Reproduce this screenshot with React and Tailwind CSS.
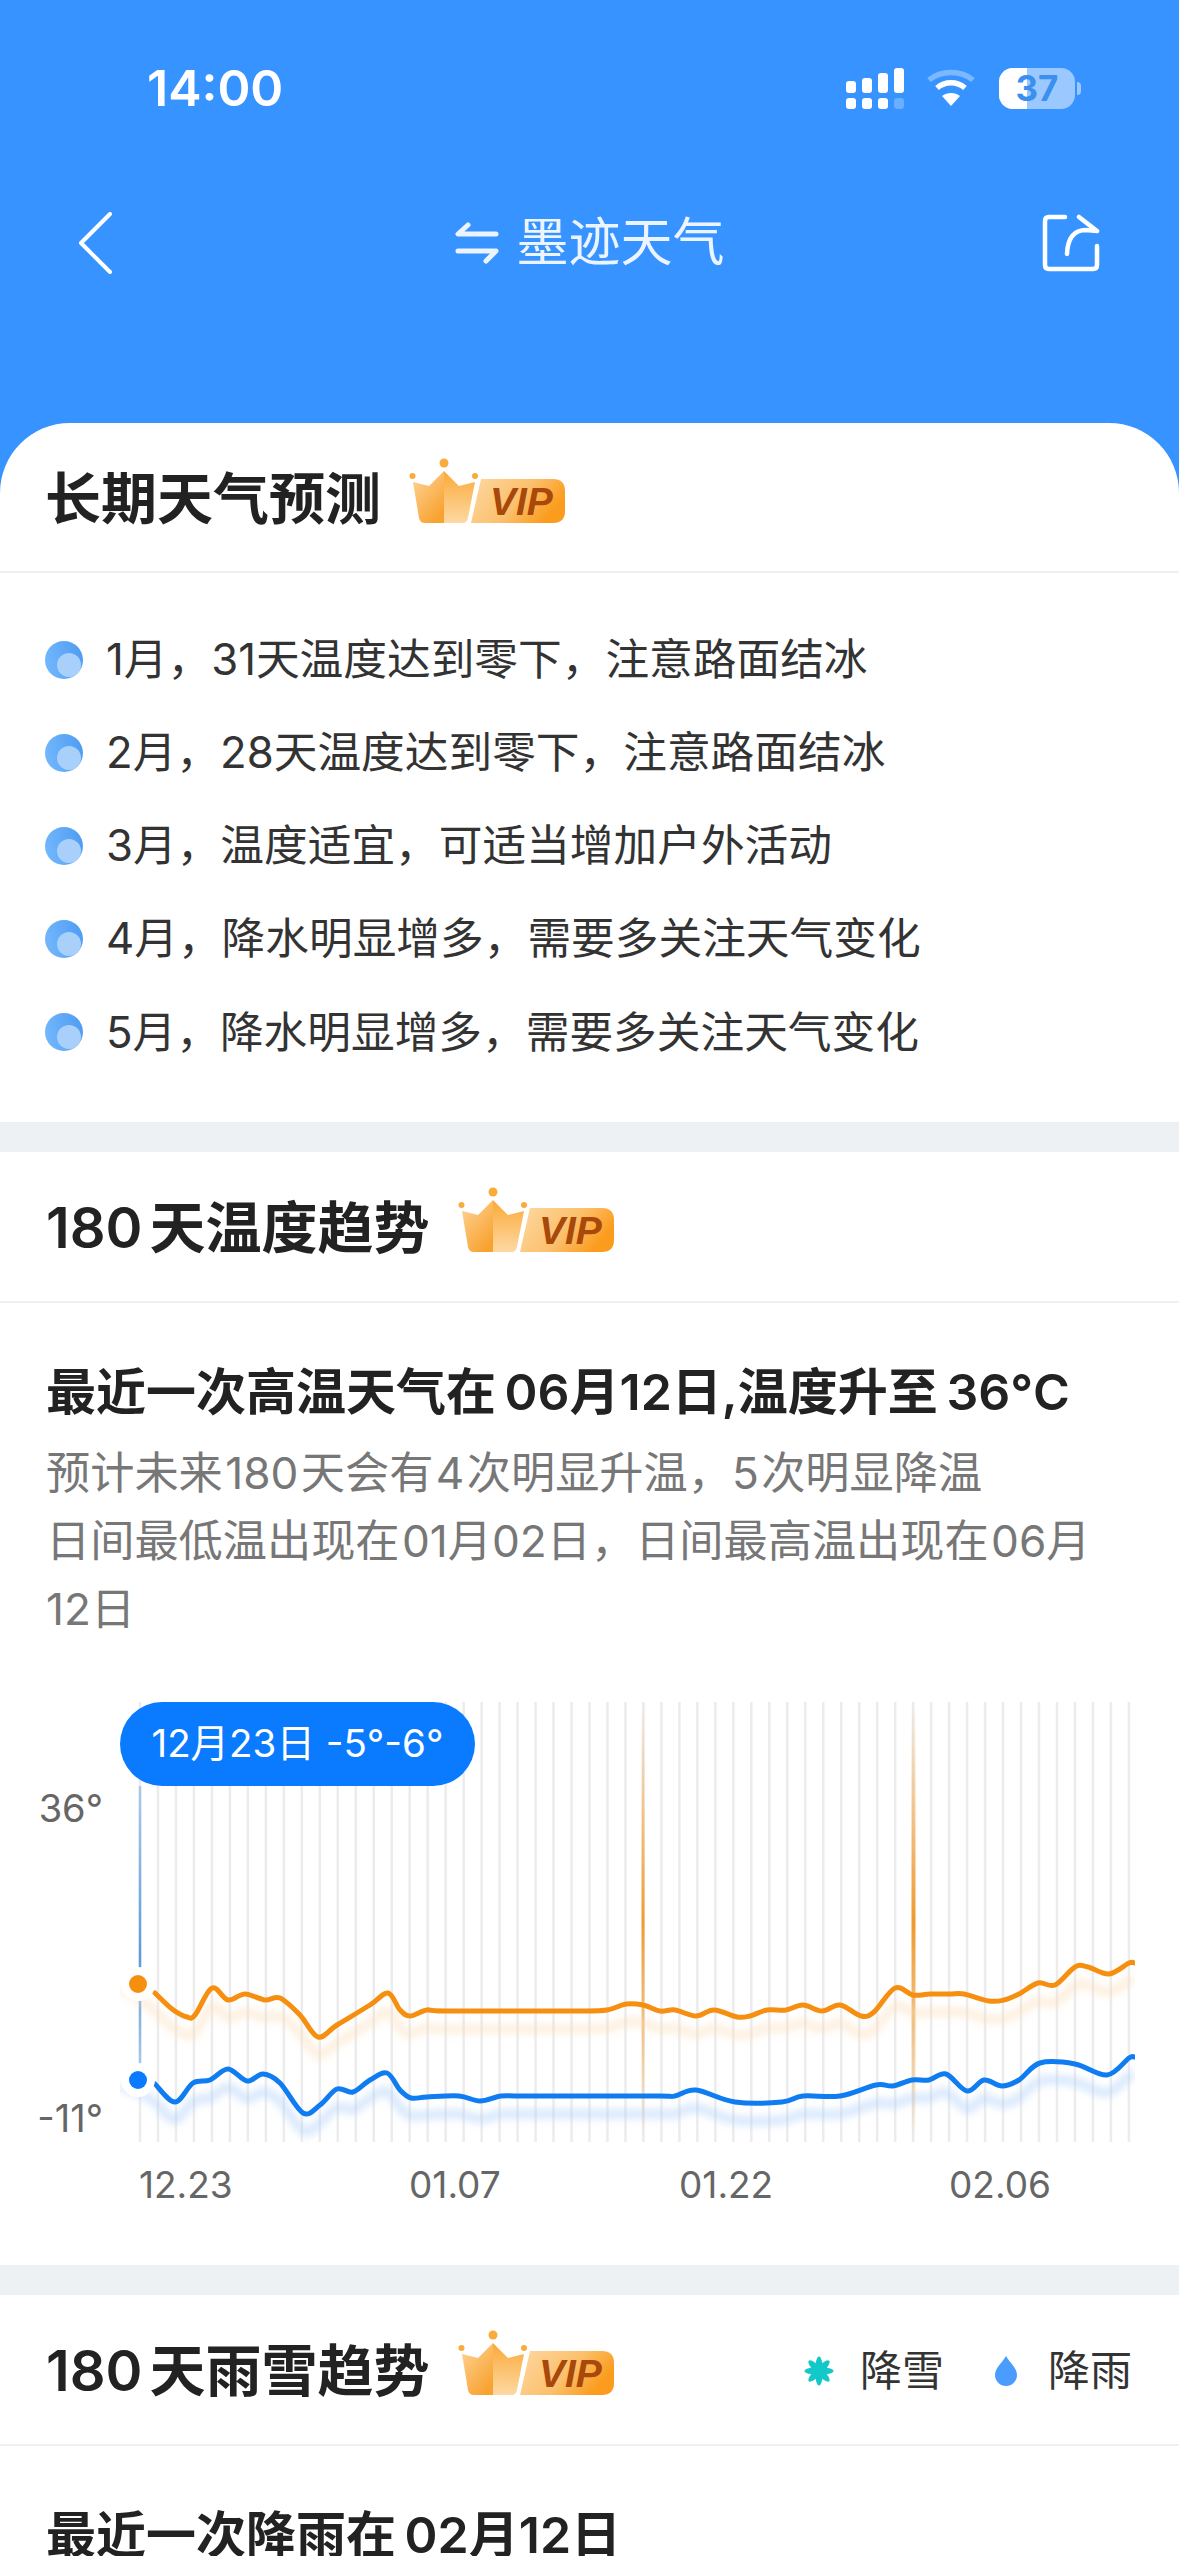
import React from 'react';

const MONTH_NOTES = [
  '1月，31天温度达到零下，注意路面结冰',
  '2月，28天温度达到零下，注意路面结冰',
  '3月，温度适宜，可适当增加户外活动',
  '4月，降水明显增多，需要多关注天气变化',
  '5月，降水明显增多，需要多关注天气变化',
];

// daily highs and lows, in plot coordinates
const HIGHS = [[155,1993],[172,2009],[187,2017],[195,2015],[212,1988],[228,2000],[245,1994],[265,2000],[280,1998],[300,2015],[318,2037],[337,2025],[370,2005],[388,1993],[400,2010],[410,2016],[427,2010],[445,2011],[560,2011],[580,2011],[607,2010],[626,2004],[643,2005],[660,2011],[675,2010],[696,2016],[714,2010],[737,2017],[750,2016],[767,2010],[786,2010],[803,2005],[822,2011],[840,2005],[861,2016],[874,2012],[895,1988],[913,1995],[930,1994],[950,1994],[964,1994],[989,2001],[1004,2000],[1019,1994],[1038,1983],[1055,1985],[1075,1967],[1088,1967],[1109,1974],[1129,1963],[1134,1963]];
const LOWS = [[155,2084],[175,2102],[193,2083],[210,2080],[228,2069],[247,2081],[263,2074],[280,2083],[303,2113],[320,2105],[337,2089],[353,2092],[370,2080],[387,2073],[400,2090],[411,2098],[427,2097],[459,2096],[480,2101],[501,2096],[520,2096],[580,2096],[660,2096],[675,2096],[696,2090],[735,2102],[782,2102],[803,2096],[840,2096],[876,2085],[893,2086],[912,2080],[929,2080],[946,2074],[967,2091],[984,2080],[1002,2086],[1019,2080],[1040,2063],[1075,2064],[1107,2075],[1129,2058],[1134,2057]];

const GRID_XS = Array.from({ length: 56 }, (_, i) => 140 + i * 17.98);

// catmull-rom through the points, flattened to cubic beziers
function smooth(points) {
  let d = `M${points[0][0]} ${points[0][1]}`;
  for (let i = 0; i < points.length - 1; i++) {
    const p0 = points[i - 1] || points[i];
    const p1 = points[i];
    const p2 = points[i + 1];
    const p3 = points[i + 2] || p2;
    const c1x = p1[0] + (p2[0] - p0[0]) / 6;
    const c1y = p1[1] + (p2[1] - p0[1]) / 6;
    const c2x = p2[0] - (p3[0] - p1[0]) / 6;
    const c2y = p2[1] - (p3[1] - p1[1]) / 6;
    d += ` C${c1x} ${c1y} ${c2x} ${c2y} ${p2[0]} ${p2[1]}`;
  }
  return d;
}

function VipBadge() {
  return (
    <svg width="156" height="65" viewBox="0 0 156 65" className="shrink-0">
      <defs>
        <linearGradient id="crownLeft" x1="0" y1="0" x2="0.7" y2="1">
          <stop offset="0" stopColor="#ffd59a" />
          <stop offset="1" stopColor="#f8a230" />
        </linearGradient>
        <linearGradient id="crownRight" x1="0" y1="0" x2="0" y2="1">
          <stop offset="0" stopColor="#fba937" />
          <stop offset="1" stopColor="#fdd9a4" />
        </linearGradient>
        <linearGradient id="vipPill" x1="0" y1="0" x2="1" y2="0.4">
          <stop offset="0" stopColor="#fdd8a2" />
          <stop offset="0.6" stopColor="#fcc06c" />
          <stop offset="1" stopColor="#fb9c1e" />
        </linearGradient>
      </defs>
      <circle cx="35" cy="5" r="4.5" fill="#f9ab3b" />
      <circle cx="3.5" cy="18" r="3" fill="#f9ab3b" />
      <circle cx="66" cy="18" r="3" fill="#f9ab3b" />
      <path d="M4 24 L20 28 L35 13 L35 65 L16 65 Q11 65 10 60 Z" fill="url(#crownLeft)" />
      <path d="M35 13 L50 28 L66 24 L59 60 Q58 65 54 65 L35 65 Z" fill="url(#crownRight)" />
      <path d="M72 21 L144 21 Q156 21 156 33 L156 53 Q156 65 144 65 L62 65 Z" fill="url(#vipPill)" />
      <text x="81" y="57" fontFamily="Liberation Sans" fontWeight="700" fontStyle="italic" fontSize="39" fill="#a8480a">VIP</text>
    </svg>
  );
}

function SectionHead({ title, children }) {
  return (
    <div className="h-[151px] flex items-center justify-between pl-[46px] pr-[47px] border-b-2 border-[#eff0f2]">
      <div className="flex items-center gap-[28px]">
        <h2 className="mt-[3px] text-[56px] leading-[70px] font-semibold text-[#222] [word-spacing:-7px]">{title}</h2>
        <div className="-mt-[13px]"><VipBadge /></div>
      </div>
      {children}
    </div>
  );
}

function Bullet() {
  return (
    <svg width="38" height="38" viewBox="0 0 38 38" className="shrink-0">
      <defs>
        <linearGradient id="bulletFill" x1="0" y1="0.5" x2="1" y2="0.3">
          <stop offset="0" stopColor="#71b7fc" />
          <stop offset="1" stopColor="#4f9cf3" />
        </linearGradient>
      </defs>
      <circle cx="19" cy="19" r="19" fill="url(#bulletFill)" />
      <circle cx="24" cy="24" r="12" fill="#a9d0fb" />
    </svg>
  );
}

function SignalIcon() {
  const tops = [13, 10, 5, 0];
  return (
    <svg width="58" height="41" viewBox="0 0 58 41">
      {tops.map((t, i) => (
        <g key={i} fill="#fff">
          <rect x={i * 16} y={t} width="10" height={25 - t} rx="3" />
          <rect x={i * 16} y="30" width="10" height="11" rx="3" opacity={i === 3 ? 0.25 : 1} />
        </g>
      ))}
    </svg>
  );
}

function WifiIcon() {
  return (
    <svg width="50" height="38" viewBox="0 0 50 38" fill="none">
      <path d="M3 11 C15 1 35 1 47 11" stroke="#fff" strokeOpacity="0.35" strokeWidth="5.5" />
      <path d="M11 19 C19 12 31 12 39 19" stroke="#fff" strokeWidth="5.5" />
      <path d="M25 37 L16 27 C21 23 29 23 34 27 Z" fill="#fff" />
    </svg>
  );
}

function TemperatureChart() {
  const highs = smooth(HIGHS);
  const lows = smooth(LOWS);
  return (
    <div className="relative mt-[57px] h-[445px] flex">
      <div className="w-[120px] pr-[17px] pt-[84px] pb-[3px] flex flex-col justify-between items-end text-[38px] leading-[48px] text-[#666]">
        <span>36°</span>
        <span>-11°</span>
      </div>
      <svg width="1015" height="445" viewBox="120 1700 1015 445" className="shrink-0">
        <defs>
          <filter id="lineGlow" x="-5%" y="-50%" width="110%" height="200%">
            <feGaussianBlur stdDeviation="4" />
          </filter>
          <linearGradient id="peakLine" x1="0" y1="0" x2="0" y2="1">
            <stop offset="0" stopColor="#f09a2e" stopOpacity="0" />
            <stop offset="0.5" stopColor="#f09a2e" />
            <stop offset="1" stopColor="#f09a2e" stopOpacity="0" />
          </linearGradient>
          <linearGradient id="cursorLine" gradientUnits="userSpaceOnUse" x1="0" y1="1786" x2="0" y2="2070">
            <stop offset="0" stopColor="#a9cbe9" />
            <stop offset="0.6" stopColor="#5b9bd8" />
            <stop offset="1" stopColor="#a9cbe9" />
          </linearGradient>
        </defs>
        {GRID_XS.map((x) => (
          <line key={x} x1={x} x2={x} y1="1702" y2="2142" stroke="#ececee" strokeWidth="2.5" />
        ))}
        <rect x="641.5" y="1702" width="3" height="440" fill="url(#peakLine)" />
        <rect x="911.5" y="1702" width="4" height="440" fill="url(#peakLine)" />
        <line x1="140" x2="140" y1="1786" y2="2075" stroke="url(#cursorLine)" strokeWidth="2.5" />

        {/* soft echo under each curve */}
        <path d={smooth([[120, 1990], [138, 2000], ...HIGHS.map(([x, y]) => [x, y + 20])])} transform="translate(0 -2)" stroke="#fbd9ae" strokeOpacity="0.55" strokeWidth="7" fill="none" filter="url(#lineGlow)" />
        <path d={smooth([[120, 2088], [138, 2094], ...LOWS.map(([x, y]) => [x, y + 20])])} transform="translate(0 -2)" stroke="#a9cdfa" strokeOpacity="0.6" strokeWidth="7" fill="none" filter="url(#lineGlow)" />

        <path d={highs} stroke="#f68f10" strokeWidth="5" strokeLinecap="round" fill="none" />
        <path d={lows} stroke="#0f7cf2" strokeWidth="5" strokeLinecap="round" fill="none" />

        <circle cx="138" cy="1984" r="17" fill="#fff" />
        <circle cx="138" cy="1984" r="9" fill="#f68f10" />
        <circle cx="138" cy="2080" r="17" fill="#fff" />
        <circle cx="138" cy="2080" r="9" fill="#0a7bff" />
      </svg>
      <div className="absolute left-[120px] top-[2px] w-[355px] h-[84px] rounded-[42px] bg-[#0a7bff] flex items-center justify-center text-[38.5px] text-white whitespace-pre">
        12月23日 -5°-6°
      </div>
    </div>
  );
}

export default function App() {
  return (
    <div className="w-[1179px] h-[2556px] overflow-hidden bg-[#3793ff] font-['Inter','Noto_Sans_CJK_SC',sans-serif]">
      {/* status bar */}
      <div className="h-[176px] flex items-center justify-between pl-[147px] pr-[98px]">
        <span className="text-[50px] font-semibold text-white">14:00</span>
        <div className="flex items-center">
          <SignalIcon />
          <div className="ml-[22px]"><WifiIcon /></div>
          <div className="relative ml-[23px] w-[76px] h-[41px] rounded-[14px] bg-white/50 overflow-hidden flex items-center justify-center">
            <div className="absolute left-0 top-0 bottom-0 w-[28px] bg-white" />
            <span className="relative text-[35px] font-bold text-[#3b8fee]">37</span>
          </div>
          <div className="ml-[2px] w-[4px] h-[13px] rounded-r-full bg-white/50" />
        </div>
      </div>

      {/* nav bar */}
      <div className="h-[134px] flex items-center justify-between pl-[78px] pr-[79px]">
        <svg width="34" height="62" viewBox="0 0 34 62" fill="none" stroke="#fff" strokeWidth="4" strokeLinecap="round" strokeLinejoin="round">
          <path d="M32 2 L3 31 L32 60" />
        </svg>
        <div className="ml-[26px] flex items-center gap-[17px] text-white/90">
          <svg width="44" height="42" viewBox="0 0 44 42" fill="none" stroke="#fff" strokeOpacity="0.9" strokeWidth="5" strokeLinecap="round" strokeLinejoin="round">
            <path d="M13 3 L3 12 L41 12" />
            <path d="M3 29 L41 29 L31 39" />
          </svg>
          <span className="text-[52px] font-normal leading-[60px]">墨迹天气</span>
        </div>
        <svg width="58" height="58" viewBox="0 0 58 58" fill="none" stroke="#fff" strokeWidth="4.5" strokeLinecap="round" strokeLinejoin="round">
          <path d="M23 3 L7 3 Q3 3 3 7 L3 51 Q3 55 7 55 L51 55 Q55 55 55 51 L55 32" />
          <path d="M37 3 L55 17 L44 16 Q26 16 25 40" />
        </svg>
      </div>

      <div className="mt-[113px] rounded-t-[70px] bg-white">
        {/* long range forecast */}
        <div className="pb-[43px]">
          <div className="h-[150px] flex items-center pl-[45px] border-b-2 border-[#eff0f2]">
            <h2 className="mt-[3px] text-[56px] leading-[70px] font-semibold text-[#222]">长期天气预测</h2>
            <div className="ml-[28px] -mt-[13px]"><VipBadge /></div>
          </div>
          <ul className="pt-[40px]">
            {MONTH_NOTES.map((note) => (
              <li key={note} className="h-[93.2px] flex items-center gap-[23px] pl-[45px] text-[43.7px] text-[#333]">
                <Bullet />
                <span>{note}</span>
              </li>
            ))}
          </ul>
        </div>

        <div className="h-[30px] bg-[#eef1f4]" />

        {/* temperature trend */}
        <div className="pb-[56px]">
          <SectionHead title="180 天温度趋势" />
          <div className="pt-[55px] pl-[46px] pr-[40px]">
            <h3 className="text-[50px] leading-[68px] font-semibold text-[#222] [word-spacing:-4px]">最近一次高温天气在 06月12日,温度升至 36°C</h3>
            <p className="mt-[13px] text-[44.2px] leading-[68px] text-[#777] [word-spacing:-10px]">
              预计未来 180 天会有 4 次明显升温，5 次明显降温<br />
              日间最低温出现在 01月02日，日间最高温出现在 06月<br />
              12日
            </p>
          </div>
          <TemperatureChart />
          <div className="mt-[16px] flex pl-[139px] text-[37px] leading-[48px] text-[#666]">
            {['12.23', '01.07', '01.22', '02.06'].map((d) => (
              <span key={d} className="w-[270px] shrink-0">{d}</span>
            ))}
          </div>
        </div>

        <div className="h-[30px] bg-[#eef1f4]" />

        {/* rain and snow trend */}
        <SectionHead title="180 天雨雪趋势">
          <div className="mt-[3px] flex items-center text-[42px] text-[#333]">
            <svg width="30" height="30" viewBox="0 0 30 30" fill="#12c8c8">
              {[0, 45, 90, 135].map((r) => (
                <ellipse key={r} cx="15" cy="15" rx="4" ry="14.5" transform={`rotate(${r} 15 15)`} />
              ))}
            </svg>
            <span className="ml-[26px]">降雪</span>
            <svg className="ml-[51px]" width="22" height="30" viewBox="0 0 22 30" fill="#4a9dfd">
              <path d="M11 0 C15 7 22 12 22 19 A11 11 0 0 1 0 19 C0 12 7 7 11 0 Z" />
            </svg>
            <span className="ml-[31px]">降雨</span>
          </div>
        </SectionHead>
        <div className="pt-[55px] pl-[46px]">
          <h3 className="text-[50px] leading-[68px] font-semibold text-[#222] [word-spacing:-4px]">最近一次降雨在 02月12日</h3>
        </div>
      </div>
    </div>
  );
}
